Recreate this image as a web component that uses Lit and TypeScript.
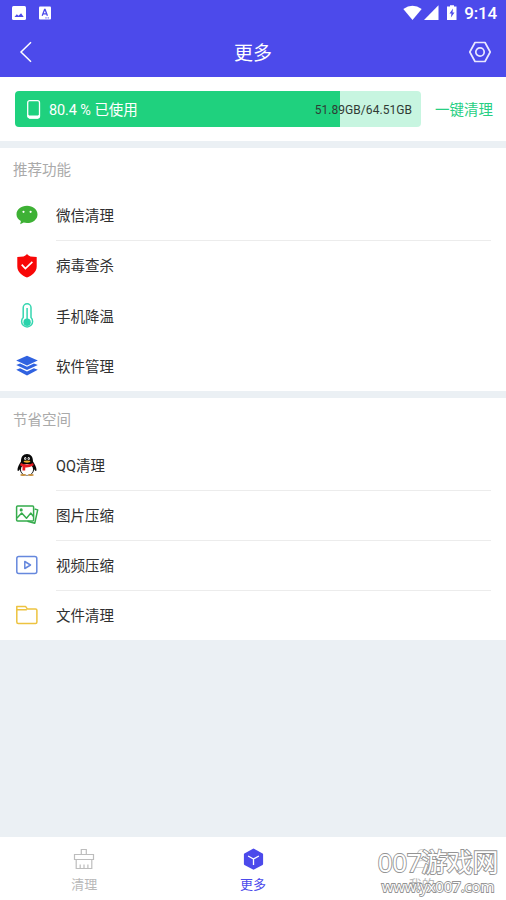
import { LitElement, html, css, svg } from "lit";
import { customElement } from "lit/decorators.js";
import { classMap } from "lit/directives/class-map.js";

const icons = {
  wechat: svg`<path fill="#3eb135" d="M11 1.800c5.900 0 10.500 3.700 10.500 8.600S16.900 19 11 19c-1.200 0-2.300-.1-3.300-.4L4.200 20.200l.7-3.200C2.200 15.400.5 13.100.5 10.400.5 5.500 5.100 1.800 11 1.800z"/><circle cx="7.500" cy="7.800" r="1.100" fill="#fff"/><circle cx="14.600" cy="7.800" r="1.100" fill="#fff"/>`,
  shield: svg`<path fill="#f80707" d="M11 -1.300Q12.200 1 14.500 1.400L20.700 2V11.500c0 5.500-4.500 9-9.700 11C5.800 20.500 1.300 17 1.300 11.500V2L7.500 1.400Q9.800 1 11-1.300z"/><path fill="none" stroke="#fff" stroke-width="1.700" d="M5.700 9.600l3.700 4 7-6.800"/>`,
  thermo: svg`<path fill="none" stroke="#36d6b0" stroke-width="1.500" d="M7.200 12.500V2.700a3.900 3.900 0 0 1 7.800 0v9.800a5.500 5.500 0 1 1-7.800 0z"/><path stroke="#36d6b0" stroke-width="1.500" d="M11.100 3v12"/><circle cx="11.100" cy="17.300" r="3.700" fill="#28d3ab"/>`,
  layers: svg`<g fill="#3062e0"><path d="M11 .7l10.800 4.900L11 10.500.2 5.600z"/><path d="M.2 10l3.900-1.400L11 11.700l6.900-3.100 3.900 1.400L11 15.100z"/><path d="M.2 14.800l3.900-1.500L11 16.500l6.900-3.200 3.900 1.500L11 20.500z"/></g>`,
  penguin: svg`<path fill="#080808" d="M11 0c3.900 0 6 2.900 6 7.400 1.600 2.500 3.700 5.900 3.500 8.600-.1 1.600-1.400 1-2.400-.7-.5 4-3 6.200-7.100 6.200S4.400 19.300 3.900 15.300c-1 1.700-2.300 2.300-2.400.7-.2-2.700 1.900-6.100 3.500-8.600C5 2.900 7.100 0 11 0z"/><ellipse cx="11" cy="15.500" rx="6.100" ry="5.600" fill="#fff"/><ellipse cx="7.100" cy="21" rx="3" ry=".9" fill="#c58d3a"/><ellipse cx="14.900" cy="21" rx="3" ry=".9" fill="#c58d3a"/><path fill="#e81c22" d="M4.900 8.900q6.100 3.200 12.200 0l.6 2.300q-4.500 2.600-8.400 2.200l-.1 3.200H6.500v-4.100l-2.500-1.300z"/><ellipse cx="9.300" cy="4.500" rx="1.100" ry="1.600" fill="#fff"/><ellipse cx="12.700" cy="4.500" rx="1.100" ry="1.600" fill="#fff"/><circle cx="9.700" cy="4.700" r=".5"/><circle cx="12.300" cy="4.700" r=".5"/><ellipse cx="11" cy="7.600" rx="3.300" ry="1.100" fill="#f2b22e"/>`,
  photos: svg`<g fill="none" stroke="#35ac4c" stroke-width="1.500" stroke-linejoin="round"><rect x=".6" y="2" width="17" height="15" rx="1"/><path d="M1 14l4.700-5 4.800 5.300 4.200-5.200 2.800 3.400M18.600 5l3.100.9-2.900 13.300-7.300-2"/><circle cx="5.200" cy="5.900" r=".8"/></g>`,
  video: svg`<g fill="none" stroke="#6688dd" stroke-width="1.500" stroke-linejoin="round"><rect x=".8" y="2.500" width="20" height="17" rx="2"/><path d="M8.800 7.500v7l5.700-3.500z"/></g>`,
  folder: svg`<path fill="none" stroke="#edc340" stroke-width="1.500" stroke-linejoin="round" d="M.8 5.700V2.400h8.700l1.800 2.500h8.200q1.400 0 1.400 1.400v11.800q0 1.500-1.400 1.500H2.200Q.8 19.600.8 18.100V5.700h10"/>`,
};
type IconName = keyof typeof icons;
interface Item { icon: IconName; label: string; line?: boolean; tall?: boolean }

const groups: { title: string; items: Item[] }[] = [
  { title: "推荐功能", items: [
    { icon: "wechat", label: "微信清理" },
    { icon: "shield", label: "病毒查杀", line: true, tall: true },
    { icon: "thermo", label: "手机降温" },
    { icon: "layers", label: "软件管理" },
  ] },
  { title: "节省空间", items: [
    { icon: "penguin", label: "QQ清理" },
    { icon: "photos", label: "图片压缩", line: true },
    { icon: "video", label: "视频压缩", line: true },
    { icon: "folder", label: "文件清理", line: true },
  ] },
];

@customElement("app-root")
export class AppRoot extends LitElement {
  static styles = css`
    :host {
      display: flex; flex-direction: column; height: 900px; position: relative; overflow: hidden;
      background: #ebf0f4; color: #303030;
      font-family: Roboto, "Noto Sans CJK SC", sans-serif;
    }
    svg { display: block; flex: none; overflow: visible; }
    .top { height: 77px; flex: none; background: #4c4aeb; color: #fff; }
    .status { height: 26px; display: flex; align-items: center; padding: 0 9px 0 12px; box-sizing: border-box; }
    .notes { display: flex; gap: 13px; flex: 1; }
    .clock { font-size: 17px; font-weight: 500; line-height: 26px; margin-left: 6px; letter-spacing: -.2px; }
    .bar { height: 51px; display: grid; grid-template-columns: 40px 1fr 40px; align-items: center; padding: 0 15px 0 19px; box-sizing: border-box; }
    .title { text-align: center; font-size: 19px; line-height: 28px; padding: 4px 4px 0 0; }
    .gear { justify-self: end; }
    .storage { height: 64px; box-sizing: border-box; flex: none; background: #fff; display: flex; align-items: center; padding: 0 13px 0 15px; justify-content: space-between; }
    .meter { width: 406px; height: 36px; border-radius: 4px; background: linear-gradient(90deg, #1fd17e 325px, #c7f5e0 325px); display: flex; align-items: center; padding: 0 9px 0 12px; box-sizing: border-box; }
    .used { color: #fff; font-size: 14.500px; margin-left: 8px; flex: 1; padding-bottom: 1px; letter-spacing: -.1px; }
    .size { font-size: 12px; color: #303b35; letter-spacing: .05px; padding-top: 1px; }
    .clean { color: #27cf83; font-size: 14.500px; padding-bottom: 2px; }
    .group { margin-top: 7px; background: #fff; flex: none; }
    .heading { height: 42px; line-height: 45px; padding-left: 13px; font-size: 14.500px; color: #aaa; }
    .row { height: 50px; display: flex; align-items: center; padding: 0 15px 0 15.500px; }
    .row.tall { height: 51px; }
    .label { flex: 1; height: 100%; box-sizing: border-box; border-top: 1px solid transparent; margin-left: 18.500px; padding-bottom: 3px; display: flex; align-items: center; font-size: 14.500px; }
    .line .label { border-top-color: #ececec; }
    .tabs { height: 63px; margin-top: auto; background: #fff; display: grid; grid-template-columns: repeat(3, 1fr); }
    .tab { display: flex; flex-direction: column; align-items: center; padding-top: 11px; font-size: 13px; line-height: 18px; gap: 6px; color: #b8b8b8; }
    .active { color: #4c4aeb; }
    .mark { position: absolute; right: 4px; bottom: 5px; width: 128px; text-align: center; color: #fff; white-space: nowrap; paint-order: stroke fill; font-family: "Open Sans", "Noto Sans CJK SC", sans-serif; -webkit-text-stroke: 1.800px #949494; }
    .site { font-size: 26px; line-height: 32px; letter-spacing: -.35px; }
    .url { font-size: 15px; line-height: 17px; letter-spacing: -.1px; }
  `;

  render() {
    return html`
      <header class="top">
        <div class="status">
          <div class="notes">
            <svg width="14" height="14" viewBox="0 0 14 14"><rect width="14" height="14" rx="1.500" fill="#fff"/><path fill="#4c4aeb" d="M2.500 11l2.300-2.800 1.700 1.500 2.600-2.500 2.600 3.800z"/></svg>
            <svg width="12" height="14" viewBox="0 0 12 14"><rect y=".5" width="12" height="13" rx="1" fill="#fff"/><path fill="none" stroke="#4c4aeb" stroke-width="1.300" d="M3.200 9.700L5.600 3.500h.5l2.300 6.200M4 7.800h3.600M6.500 11.800h1M8.700 11.800h1"/></svg>
          </div>
          <svg width="55" height="16" viewBox="0 0 55 16"><g fill="#fff"><path d="M.3 4Q9.500-2.500 18.700 4L9.500 15z"/><path d="M35.500 .3V15H21z"/><path d="M45 1.500h2V.2h4v1.300h2.500V15H44V1.500z"/></g><path fill="#4c4aeb" d="M50 3.500l-3.500 5h2l-.6 4 3.600-5h-2z"/></svg>
          <span class="clock">9:14</span>
        </div>
        <div class="bar">
          <svg width="12" height="22" viewBox="0 0 12 22"><path d="M12 1.200L2 11l10 9.800" fill="none" stroke="#fff" stroke-width="1.500"/></svg>
          <div class="title">更多</div>
          <svg class="gear" width="22" height="22" viewBox="0 0 22 22" fill="none" stroke="#e9e8ff" stroke-width="1.700" stroke-linejoin="round"><path d="M6 1.500h10L21.200 11 16 20.500H6L.8 11z"/><circle cx="11" cy="11" r="4.200"/></svg>
        </div>
      </header>
      <div class="storage">
        <div class="meter">
          <svg width="14" height="19" viewBox="0 0 14 19"><rect x=".7" y=".7" width="11.800" height="17.300" rx="2" fill="none" stroke="#fff" stroke-width="1.300"/><path fill="#fff" d="M.8 14.500l1.500.9h8.600l1.500-.9v2.500l-1.500 1.500H2.300L.8 17z"/></svg>
          <span class="used">80.4 % 已使用</span>
          <span class="size">51.89GB/64.51GB</span>
        </div>
        <span class="clean">一键清理</span>
      </div>
      ${groups.map((g) => html`<section class="group">
        <div class="heading">${g.title}</div>
        ${g.items.map((i) => html`<div class=${classMap({ row: true, line: !!i.line, tall: !!i.tall })}>
          <svg width="22" height="22" viewBox="0 0 22 22">${icons[i.icon]}</svg>
          <div class="label">${i.label}</div>
        </div>`)}
      </section>`)}
      <nav class="tabs">
        <div class="tab">
          <svg width="22" height="22" viewBox="0 0 22 22" fill="none" stroke="#bdbdbd" stroke-width="1.200"><path d="M8.300 6.500V1.500h5v5M1.500 6.500h19v5h-19zM3.200 11.500v9h15.600v-9M7.200 20.500v-4M11 20.500v-4M14.900 20.500v-4"/></svg>
          <span>清理</span>
        </div>
        <div class="tab active">
          <svg width="22" height="22" viewBox="0 0 22 22"><path d="M11.500 1.500l8.600 4.800v9.800l-8.600 4.600-8.600-4.600V6.300z" fill="#4c4aeb" stroke="#4c4aeb" stroke-width="2" stroke-linejoin="round"/><path d="M6.100 8l5.400 3 5.400-3M11.500 11v6" fill="none" stroke="#fff" stroke-width="1.300"/></svg>
          <span>更多</span>
        </div>
        <div class="tab">
          <svg width="22" height="22" viewBox="0 0 22 22" fill="none" stroke="#cfcfcf" stroke-width="1.200"><circle cx="11" cy="6" r="4.500"/><path d="M3 19.500q0-7 8-7t8 7z"/></svg>
          <span>我的</span>
        </div>
      </nav>
      <div class="mark"><div class="site">007游戏网</div><div class="url">www.yx007.com</div></div>
    `;
  }
}
